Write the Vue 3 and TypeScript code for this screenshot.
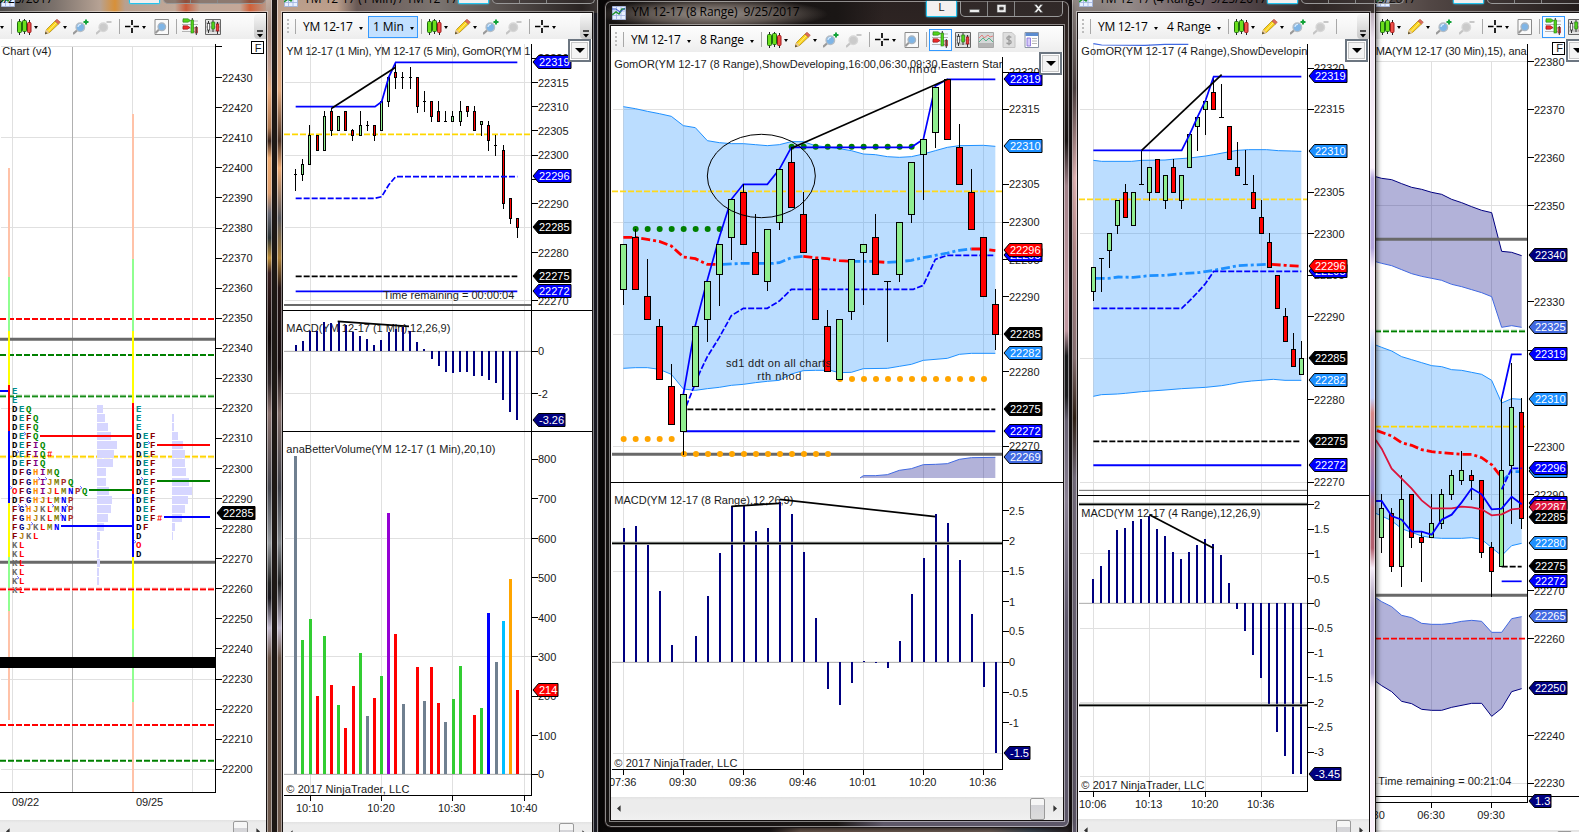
<script setup lang="ts">
type Attrs = Record<string, string | number>
interface Shape { tag: string; attrs: Attrs; text?: string }
type Pt = [number, number]
// high, body top, body bottom, low, kind (g up, r down, k flat)
type Candle = [number, number, number, number, 'g' | 'r' | 'k']

const BLUE = '#0000ff'
const NAVY = '#000080'
const DODGER = '#1e90ff'
const ROYAL = '#4169e1'
const RED = '#ff0000'
const GREEN = '#008000'
const GOLD = '#ffd700'
const ORANGE = '#ffa500'

/** Collects the shapes of one chart; data units are a third of a pixel. */
class Plot {
  shapes: Shape[] = []
  constructor(private ox: number, private axis: number, private left: number) {}
  X(x: number) { return this.ox + x / 3 }
  add(tag: string, attrs: Attrs, text?: string) { this.shapes.push({ tag, attrs, text }) }
  rect(x: number, y: number, width: number, height: number, fill: string, extra: Attrs = {}) {
    this.add('rect', { x, y, width, height, fill, ...extra })
  }
  text(x: number, y: number, s: string, extra: Attrs = {}) {
    this.add('text', { x: this.X(x), y: Math.round(y / 3) + 4, ...extra }, s)
  }
  gridH(...ys: number[]) { ys.forEach(y => this.rect(this.ox + Math.floor(this.left / 3) + 1, Math.floor(y / 3), (this.axis - this.left) / 3 - 1, 1, '#e0e0e0')) }
  gridV(y0: number, y1: number, ...xs: number[]) { xs.forEach(x => this.rect(this.ox + Math.floor(x / 3), y0, 1, y1 - y0, '#e0e0e0')) }
  path(pts: Pt[], stroke: string, width = 1.7, dash = '', oy = 0) {
    this.add('polyline', {
      points: pts.map(([x, y]) => `${this.X(x).toFixed(2)},${((y + oy) / 3).toFixed(2)}`).join(' '),
      fill: 'none', stroke, 'stroke-width': width, ...(dash ? { 'stroke-dasharray': dash } : {}),
    })
  }
  level(y: number, stroke: string, width: number, dash = '', x0 = this.left, x1 = this.axis) {
    this.path([[x0, y], [x1, y]], stroke, width, dash)
  }
  soft(y: number) { this.level(y, '#8a8f8a', 3); this.level(y, '#000', 1.2) }
  area(up: Pt[], low: Pt[], fill: string, oy = 0) {
    const pts = [...up, ...[...low].reverse()]
    this.add('polygon', { points: pts.map(([x, y]) => `${this.X(x)},${(y + oy) / 3}`).join(' '), fill, 'fill-opacity': 0.3 })
  }
  candles(x0: number, step: number, body: number, rows: Candle[], oy = 0) {
    const h = (body - 1) / 2
    rows.forEach(([hi, top, bot, lo, kind], i) => {
      const x = this.ox + Math.floor((x0 + step * i) / 3)
      const q = (v: number) => Math.floor((v + oy) / 3)
      this.rect(x, q(hi), 1, q(lo) - q(hi) + 1, '#000')
      this.rect(x - h, q(top), body, kind === 'k' ? 1 : q(bot) - q(top) + 1, '#000')
      if (kind !== 'k') this.rect(x - h + 1, q(top) + 1, body - 2, Math.max(1, q(bot) - q(top) - 1), kind === 'g' ? '#90ee90' : RED)
    })
  }
  bars(x0: number, step: number, zero: number, ends: number[], width: number, color: (i: number) => string, oy = 0) {
    ends.forEach((e, i) => {
      const a = Math.round((Math.min(e, zero) + oy) / 3)
      const b = Math.round((Math.max(e, zero) + oy) / 3)
      if (b > a) this.rect(this.ox + Math.round((x0 + step * i) / 3), a, width, b - a, color(i))
    })
  }
  dots(y: number, xs: number[], fill: string) {
    xs.forEach(x => this.add('circle', { cx: this.X(x), cy: y / 3, r: 3, fill }))
  }
  axisLine(y0: number, y1: number, x1 = this.left) {
    const x = this.ox + Math.floor(this.axis / 3)
    this.rect(x, y0, 1, y1 - y0 + 1, '#000')
    this.rect(this.X(x1), y1, x - this.X(x1), 1, '#000')
  }
  labels(rows: [number, string][], oy = 0) {
    const x = this.ox + Math.floor(this.axis / 3)
    rows.forEach(([y, s]) => {
      this.rect(x, Math.floor((y + oy) / 3), 7, 1, '#000')
      this.add('text', { x: x + 7, y: Math.round((y + oy) / 3) + 4 }, s)
    })
  }
  times(y: number, rows: [number, string][], tick: number) {
    rows.forEach(([x, s]) => {
      this.rect(this.ox + Math.floor(x / 3), tick, 1, 6, '#000')
      this.text(x - 2, y, s, { 'text-anchor': 'middle' })
    })
  }
  tag(y: number, s: string, fill: string, width = 40) {
    const x = this.ox + Math.floor(this.axis / 3)
    const c = Math.round(y / 3)
    this.add('polygon', {
      points: `${x + 2},${c} ${x + 7.5},${c - 6.5} ${x + width},${c - 6.5} ${x + width},${c + 6.5} ${x + 7.5},${c + 6.5}`,
      fill, stroke: '#000', 'stroke-width': 1,
    })
    this.add('text', { x: x + 8, y: c + 4, class: 'inv' }, s)
  }
}
const steps = (a: number, b: number, d: number) => { const r: number[] = []; for (let v = a; v <= b; v += d) r.push(v); return r }

/* ---------- market profile ---------- */
function profileChart() {
  const p = new Plot(0, 647, 0)
  p.gridH(139, 412, 682, 1225, 1495, 2038, 2308)
  p.gridV(47, 792, 37, 397, 577)
  p.rect(72, 47, 1, 745, '#b0b0b0')
  const D = '6 2'
  p.level(957, RED, 2, D); p.level(1018, '#696969', 3); p.level(1065, GREEN, 2, D)
  p.level(1189, '#8cc88c', 3, D); p.level(1189, GREEN, 1, D)
  p.level(1370, '#ffe680', 3, D); p.level(1370, GOLD, 1.4, D)
  p.level(1687, '#696969', 3)
  p.level(2175, RED, 2, D); p.level(2282, GREEN, 2, D)
  const column = (x: number, cuts: number[], cols: string[]) =>
    cols.forEach((c, i) => p.rect(x, cuts[i], 2, cuts[i + 1] - cuts[i], c))
  const S = '#ffc2a8', G = '#90ff90', Y = '#ffff00'
  column(8, [168, 277, 331, 385, 431, 503, 557, 611, 720], [S, G, Y, RED, BLUE, Y, G, S])
  column(132, [114, 259, 331, 403, 494, 557, 629, 702, 792], [S, G, Y, RED, BLUE, Y, G, S])
  p.rect(0, 657, 216, 11, '#000')
  const hist = (x: number, from: number, ws: number[]) =>
    ws.forEach((w, i) => p.rect(x, Math.round(387 + (from + i) * 9.05), w, 8, '#d6d6ff'))
  hist(97, 2, [6, 8, 11, 14, 20, 17, 16, 9, 9, 12, 15, 14, 11, 7, 3, 2, 2, 3, 2, 2])
  hist(172, 3, [2, 2, 6, 11, 13, 13, 14, 17, 20, 16, 13, 10, 3, 1])
  const inks: Record<string, string> = {
    D: '#000', E: '#008b8b', F: '#8b0000', Q: '#008b00', I: '#800080', G: '#000080', H: '#ff8c00',
    J: '#b8860b', K: '#696969', L: '#ff0000', M: '#808000', N: '#0000ff', P: '#a52a2a', O: '#ff0000', '#': '#ff0000',
  }
  const letters = (x: number, from: number, rows: string[]) =>
    rows.forEach((r, i) => [...r].forEach((ch, k) =>
      p.add('text', { x: x + k * 7, y: Math.round(394 + (from + i) * 9.05), class: 'tpo', fill: inks[ch] }, ch)))
  p.rect(0, 390, 8, 2, BLUE)
  letters(12, 0, ['E', 'E', 'DEQ', 'DEFQ', 'DEFQ', 'DEFQ', 'DEFIQ', 'DEFIQ#', 'DEFIQ', 'DFGHIMQ', 'DFGHIJMPQ', 'OFGHIJLMNPQ',
    'DFGHJLMNP', 'FGHJKLMNP', 'FGHJKLMNP', 'FGJKLMN', 'FJKL', 'KL', 'KL', 'KL', 'KL', 'KL', 'KL'])
  letters(136, 2, ['E', 'E', 'E', 'DEF', 'DEF', 'DEF', 'DEF', 'DEF', 'DEF', 'DEF', 'DEF', 'DEF', 'DEF#', 'DF', 'D', 'O', 'D'])
  const nib = (x: number, y: number) => p.add('path', { d: `M${x} ${y - 2}l2 2-2 1`, fill: 'none', stroke: '#5050ff', 'stroke-width': 0.8 })
  ;([[24, 434], [17, 452], [38, 479], [45, 479], [10, 488], [80, 488], [18, 506], [25, 506], [52, 506], [66, 506], [60, 515], [31, 524], [17, 578],
    [148, 443], [141, 479], [134, 542]] as Pt[]).forEach(([x, y]) => nib(x, y))
  p.level(1768, '#ff7f7f', 3, D); p.level(1768, RED, 1.2, D)
  p.rect(40, 435, 92, 2, RED); p.rect(89, 489, 43, 2, GREEN); p.rect(61, 525, 71, 2, BLUE)
  p.rect(157, 444, 53, 2, RED); p.rect(157, 480, 53, 2, GREEN); p.rect(164, 516, 46, 2, BLUE)
  p.axisLine(44, 792)
  p.rect(215, 46, 7, 1, '#000')
  p.labels(steps(0, 23, 1).map(i => [233 + i * 90.2, String(22430 - i * 10)] as [number, string]))
  p.tag(1540, '22285', '#000')
  p.text(7, 153, 'Chart (v4)', { textLength: 49 })
  p.text(36, 2405, '09/22', { textLength: 27 }); p.text(408, 2405, '09/25', { textLength: 27 })
  p.rect(251.5, 41.5, 12, 12, '#fff', { stroke: '#000' }); p.text(764, 143, 'F')
  return p.shapes
}

/* ---------- one minute ---------- */
function minuteChart() {
  const p = new Plot(265, 800, 57)
  const step = 21.45
  // vertical scale of the two indicator panes
  const v = (y: number) => y * 1.0179
  p.gridV(44, 795, 136, 350, 562, 778)
  p.gridH(248, 466, 682, 902, 1180, 1616, 1970)
  p.level(403, GOLD, 1.8, '6 2'); p.level(915, '#696969', 2)
  p.candles(92, step, 3, [
    [507, 522, 524, 570, 'k'], [477, 493, 523, 540, 'g'], [375, 406, 494, 494, 'g'], [406, 406, 452, 452, 'r'], [333, 349, 452, 452, 'g'],
    [325, 334, 392, 407, 'r'], [349, 349, 391, 391, 'g'], [334, 334, 391, 391, 'r'], [389, 391, 407, 422, 'r'], [334, 376, 406, 406, 'g'],
    [363, 376, 378, 391, 'k'], [376, 376, 407, 422, 'r'], [305, 305, 391, 391, 'g'], [232, 232, 304, 320, 'g'], [188, 217, 233, 264, 'r'],
    [217, 232, 234, 264, 'k'], [202, 232, 234, 264, 'k'], [232, 232, 320, 336, 'r'], [273, 303, 305, 334, 'k'], [304, 304, 349, 365, 'r'],
    [304, 334, 363, 363, 'r'], [334, 363, 365, 365, 'k'], [334, 349, 364, 364, 'g'], [304, 333, 365, 376, 'g'], [319, 319, 335, 349, 'r'],
    [319, 334, 391, 391, 'r'], [363, 365, 374, 407, 'g'], [365, 376, 421, 452, 'r'], [405, 435, 437, 467, 'k'], [436, 451, 610, 626, 'r'],
    [595, 595, 655, 670, 'r'], [655, 655, 683, 712, 'r']])
  p.path([[92, 320], [330, 320], [350, 305], [371, 232], [392, 187], [757, 187]], BLUE)
  p.path([[92, 595], [330, 595], [350, 590], [371, 555], [392, 530], [757, 530]], BLUE, 1.7, '6 2')
  p.path([[200, 325], [392, 202]], '#000')
  p.level(829, '#000', 1.7, '6 2', 92, 757); p.level(874, BLUE, 1.7, '', 92, 757)
  p.text(355, 886, 'Time remaining = 00:00:04', { textLength: 131 })
  p.text(64, 153, 'YM 12-17 (1 Min), YM 12-17 (5 Min), GomOR(YM 1', { textLength: 244 })
  p.text(64, 984, 'MACD(YM 12-17 (1 Min),12,26,9)', { textLength: 164 })
  p.level(1054, '#a9a9a9', 1)
  p.bars(89, step, v(151), [133, 121, 90, 90, 65, 68, 62, 75, 95, 106, 115, 133, 118, 93, 84, 80, 90, 124, 144, 174, 195, 212, 214, 212, 212, 224, 224, 236, 245, 295, 330, 354].map(v), 2, () => NAVY, 900)
  p.path([[218, 964], [432, 979]], '#000')
  const V: Record<string, string> = { s: '#708090', g: '#32cd32', r: RED, p: '#9400d3', b: BLUE, c: '#00bfff', o: ORANGE }
  const kinds = 'sggrgrgrrgsrgprssrsrrsggsrgbscor'
  p.level(2323, '#a9a9a9', 1)
  p.bars(88, step, v(1398), [460, 1002, 940, 1167, 990, 1135, 1194, 1261, 1138, 1040, 1226, 1173, 1108, 628, 984, 1191, 1398, 1082, 1182, 1082, 1188, 1244, 1176, 1079, 1398, 1223, 1203, 923, 1067, 946, 822, 1149].map(v), 3, i => V[kinds[i]], 900)
  p.text(64, 1348, 'anaBetterVolume(YM 12-17 (1 Min),20,10)', { textLength: 209 })
  p.text(64, 2368, '© 2017 NinjaTrader, LLC', { textLength: 123 })
  p.axisLine(44, 795)
  p.rect(283, 310, 309, 1, '#000'); p.rect(283, 431, 309, 1, '#000')
  p.labels([[175, '22320'], [248, '22315'], [320, '22310'], [392, '22305'], [466, '22300'], [538, '22295'], [611, '22290'], [758, '22280'], [902, '22270']])
  const low: [number, string][] = [[151, '0'], [277, '-2'], [470, '800'], [586, '700'], [703, '600'], [818, '500'], [936, '400'], [1051, '300'], [1168, '200'], [1284, '100'], [1398, '0']]
  p.labels(low.map(([y, s]) => [v(y), s]), 900)
  p.tag(187, '22319', BLUE); p.tag(528, '22296', BLUE); p.tag(681, '22285', '#000'); p.tag(829, '22275', '#000'); p.tag(873, '22272', BLUE)
  p.tag(1260, '-3.26', NAVY, 34); p.tag(2070, '214', RED, 27)
  p.times(2425, [[136, '10:10'], [350, '10:20'], [562, '10:30'], [778, '10:40']], 795)
  return p.shapes
}

/* ---------- eight range ---------- */
function eightChart() {
  const p = new Plot(600, 1208, 36)
  const W = '9 3 3 3'
  p.gridV(60, 769, ...steps(70, 1150, 180))
  p.gridH(328, 667, 1003, 1339, 1714, 2260)
  const up: Pt[] = [[70, 320], [106, 326], [142, 334], [178, 341], [214, 349], [250, 377], [286, 383], [322, 422], [358, 428], [394, 431], [430, 431], [466, 434], [502, 437], [538, 434], [574, 425], [610, 425], [646, 437], [682, 441], [718, 446], [754, 452], [790, 462], [826, 464], [862, 470], [898, 472], [934, 470], [970, 462], [1006, 452], [1042, 442], [1078, 437], [1150, 436], [1186, 439]]
  const low: Pt[] = ([[70, 385], [106, 383], [142, 383], [178, 388], [214, 403], [250, 447], [286, 451], [322, 446], [358, 442], [394, 436], [430, 433], [466, 428], [502, 424], [538, 421], [574, 402], [610, 392], [646, 391], [690, 391], [718, 398], [754, 397], [790, 386], [862, 385], [898, 379], [934, 373], [970, 361], [1042, 355], [1078, 343], [1114, 340], [1186, 340]] as Pt[]).map(([x, y]) => [x, y + 720])
  p.area(up, low, DODGER)
  p.path(up, DODGER, 1); p.path(low, DODGER, 1)
  p.level(574, '#ffd91a', 1.8, '6 2')
  p.level(1363, '#696969', 3)
  const hill: Pt[] = [[780, 1434], [790, 1427], [826, 1427], [862, 1424], [898, 1411], [934, 1406], [970, 1394], [1006, 1393], [1042, 1391], [1078, 1378], [1114, 1373], [1186, 1372]]
  p.area(hill, [[780, 1434], [1186, 1434]], NAVY); p.path(hill, ROYAL, 1)
  p.dots(687, steps(107, 359, 36), GREEN); p.dots(440, steps(575, 935, 36), GREEN)
  p.dots(1317, steps(71, 215, 36), ORANGE); p.dots(1362, steps(252, 684, 36), ORANGE); p.dots(1137, steps(720, 1152, 36), ORANGE)
  p.path([[70, 712], [106, 712], [142, 718], [178, 724], [214, 738], [250, 771], [286, 776], [322, 793], [350, 793]], RED, 2.8, W)
  p.path([[368, 793], [430, 790], [520, 790], [538, 788], [574, 773], [610, 769]], DODGER, 2.8, W)
  p.path([[610, 769], [646, 773], [682, 776], [718, 782], [754, 784]], RED, 2.8, W)
  p.path([[754, 784], [826, 784]], DODGER, 2.8, W); p.path([[826, 785], [856, 787]], RED, 2.8, W)
  p.path([[862, 787], [898, 785], [934, 781], [970, 773], [1006, 766], [1042, 759], [1078, 751], [1114, 747]], DODGER, 2.8, W)
  p.path([[1114, 747], [1150, 747], [1186, 752]], RED, 2.8, W)
  p.path([[250, 1240], [298, 1120], [322, 1070], [358, 1012], [394, 947], [430, 925], [502, 925], [538, 903], [574, 868], [940, 868], [970, 856], [1006, 778], [1042, 766], [1186, 766]], BLUE, 1.7, '6 2')
  p.path([[250, 1183], [286, 976], [322, 840], [358, 712], [394, 598], [430, 553], [502, 553], [538, 508], [574, 442], [934, 442], [970, 418], [1006, 258], [1042, 238], [1186, 238]], BLUE)
  p.level(1228, '#000', 1.7, '6 2', 262, 1186); p.level(1294, BLUE, 2, '', 250, 1186)
  p.candles(70, 36, 7, [
    [733, 733, 868, 914, 'g'], [687, 712, 868, 868, 'r'], [777, 889, 959, 959, 'r'], [957, 979, 1139, 1139, 'r'], [1092, 1158, 1273, 1273, 'r'],
    [1183, 1183, 1295, 1363, 'g'], [979, 979, 1159, 1159, 'g'], [844, 844, 959, 1025, 'g'], [733, 733, 823, 915, 'g'], [598, 598, 712, 779, 'g'],
    [553, 577, 733, 733, 'r'], [642, 757, 823, 823, 'r'], [688, 688, 845, 870, 'g'], [508, 508, 667, 689, 'g'], [442, 487, 622, 622, 'r'],
    [576, 643, 758, 758, 'r'], [778, 778, 959, 959, 'r'], [932, 979, 1115, 1115, 'r'], [958, 958, 1139, 1139, 'g'], [778, 778, 934, 958, 'g'],
    [733, 733, 758, 914, 'g'], [642, 712, 823, 823, 'r'], [844, 844, 844, 1025, 'k'], [667, 667, 823, 845, 'g'], [487, 487, 643, 668, 'g'],
    [418, 418, 463, 599, 'g'], [262, 262, 398, 443, 'g'], [238, 238, 418, 418, 'r'], [373, 442, 553, 553, 'r'], [507, 577, 688, 688, 'r'],
    [712, 712, 890, 890, 'r'], [868, 913, 1003, 1049, 'r']])
  p.path([[574, 445], [1043, 238]], '#000')
  p.add('ellipse', { cx: p.X(484), cy: 176, rx: 54, ry: 41.7, fill: 'none', stroke: '#000', 'stroke-width': 1 })
  p.text(378, 1090, 'sd1 ddt on all charts', { textLength: 105 }); p.text(472, 1129, 'rth nhod', { textLength: 44 })
  p.text(43, 192, 'GomOR(YM 12-17 (8 Range),ShowDeveloping,16:00,06:30,09:30,Eastern Star', { textLength: 388 })
  p.text(928, 208, 'nhod', { textLength: 27 })
  p.text(43, 1501, 'MACD(YM 12-17 (8 Range),12,26,9)', { textLength: 179 })
  p.level(1987, '#a9a9a9', 1)
  p.bars(68, 36, 547, [144, 138, 195, 333, 495, 547, 468, 348, 219, 79, 79, 153, 144, 66, 102, 216, 414, 627, 675, 609, 543, 549, 564, 483, 342, 234, 102, 129, 240, 402, 621, 819], 2, () => NAVY, 1440)
  p.soft(1630)
  p.path([[394, 1519], [538, 1510]], '#000'); p.path([[538, 1498], [1006, 1550]], '#000')
  p.text(43, 2290, '© 2017 NinjaTrader, LLC', { textLength: 123 })
  p.axisLine(57, 769); p.rect(611, 482, 452, 1, '#000')
  p.labels([[217, '22320'], [328, '22315'], [553, '22305'], [667, '22300'], [779, '22295'], [890, '22290'], [1115, '22280'], [1339, '22270']])
  p.labels([[92, '2.5'], [182, '2'], [274, '1.5'], [365, '1'], [454, '0.5'], [547, '0'], [638, '-0.5'], [728, '-1']], 1440)
  p.tag(238, '22319', BLUE); p.tag(437, '22310', DODGER); p.tag(766, '22295', BLUE); p.tag(750, '22296', RED); p.tag(1002, '22285', '#000')
  p.tag(1058, '22282', DODGER); p.tag(1227, '22275', '#000'); p.tag(1292, '22272', BLUE); p.tag(1370, '22269', ROYAL); p.tag(2259, '-1.5', NAVY, 28)
  p.times(2347, [[70, '07:36'], [250, '09:30'], [430, '09:36'], [610, '09:46'], [790, '10:01'], [970, '10:20'], [1150, '10:36']], 769)
  return p.shapes
}

/* ---------- four range ---------- */
function fourChart() {
  const p = new Plot(1065, 728, 42)
  const W = '9 3 3 3'
  p.gridV(44, 791, 85, 253, 421, 589)
  p.gridH(328, 701, 1075, 1447, 1661, 1885, 2108, 2330)
  const up: Pt[] = [[85, 481], [110, 484], [200, 484], [230, 481], [300, 480], [330, 477], [374, 474], [422, 468], [446, 464], [494, 455], [518, 451], [550, 449], [605, 449], [640, 452], [680, 453], [709, 454]]
  const low: Pt[] = [[85, 1189], [109, 1184], [157, 1182], [181, 1180], [229, 1175], [300, 1170], [350, 1166], [422, 1162], [470, 1157], [494, 1153], [525, 1147], [560, 1143], [600, 1140], [625, 1138], [660, 1141], [709, 1141]]
  p.area(up, low, DODGER); p.path(up, DODGER, 1); p.path(low, DODGER, 1)
  p.level(598, '#ffd91a', 1.8, '6 2')
  p.path([[85, 131], [110, 135], [240, 136], [300, 133], [370, 133]], ROYAL, 1.2)
  p.path([[92, 835], [130, 835], [160, 831], [205, 832], [253, 827], [300, 826], [350, 821], [400, 818], [446, 811], [494, 802], [520, 797], [603, 793]], DODGER, 2.8, W)
  p.path([[620, 793], [660, 796], [709, 799]], RED, 2.8, W)
  p.path([[85, 925], [350, 925], [374, 902], [398, 877], [422, 850], [446, 814], [709, 814]], BLUE, 1.7, '6 2')
  p.candles(85, 24, 5, [
    [802, 802, 874, 902, 'g'], [775, 775, 775, 875, 'k'], [700, 700, 751, 803, 'g'], [601, 601, 676, 701, 'g'], [552, 577, 652, 652, 'r'],
    [577, 577, 676, 676, 'g'], [451, 553, 553, 553, 'k'], [502, 502, 577, 602, 'g'], [478, 478, 577, 577, 'r'], [526, 526, 601, 626, 'g'],
    [477, 502, 577, 577, 'r'], [526, 526, 601, 626, 'g'], [403, 403, 502, 502, 'g'], [352, 352, 379, 452, 'g'], [304, 304, 328, 404, 'g'],
    [230, 277, 328, 328, 'r'], [252, 352, 352, 352, 'k'], [379, 379, 478, 478, 'r'], [427, 502, 526, 526, 'r'], [451, 553, 553, 553, 'k'],
    [526, 577, 625, 625, 'r'], [601, 652, 700, 700, 'r'], [700, 727, 802, 802, 'r'], [826, 826, 925, 925, 'r'], [925, 949, 1024, 1024, 'r'],
    [999, 1048, 1099, 1099, 'r'], [1023, 1075, 1123, 1123, 'g']])
  p.path([[85, 451], [350, 451], [374, 403], [398, 350], [422, 300], [446, 230], [709, 230]], BLUE)
  p.path([[230, 451], [470, 224]], '#000')
  p.level(1324, '#000', 1.7, '6 2', 85, 705); p.level(1396, BLUE, 2, '', 85, 709)
  p.level(1471, '#696969', 1)
  p.text(49, 153, 'GomOR(YM 12-17 (4 Range),ShowDevelopin', { textLength: 226 })
  p.level(1810, '#a9a9a9', 1)
  p.bars(82, 24, 610, [537, 498, 450, 390, 384, 363, 357, 347, 387, 408, 456, 477, 456, 435, 417, 432, 465, 549, 627, 693, 765, 834, 912, 996, 1068, 1122, 1122], 2, () => NAVY, 1200)
  p.soft(1513); p.soft(2116)
  p.text(49, 1540, 'MACD(YM 12-17 (4 Range),12,26,9)', { textLength: 179 })
  p.path([[253, 1544], [446, 1645]], '#000')
  p.text(49, 2355, '© 2017 NinjaTrader, LLC', { textLength: 123 })
  p.axisLine(44, 791); p.rect(1078, 495, 291, 1, '#000')
  p.labels([[205, '22320'], [328, '22315'], [577, '22305'], [701, '22300'], [826, '22295'], [950, '22290'], [1199, '22280'], [1447, '22270']])
  p.labels([[314, '2'], [388, '1.5'], [461, '1'], [536, '0.5'], [610, '0'], [685, '-0.5'], [758, '-1'], [833, '-1.5'], [908, '-2'], [982, '-2.5'], [1057, '-3']], 1200)
  p.tag(228, '22319', BLUE); p.tag(453, '22310', DODGER); p.tag(813, '22295', BLUE); p.tag(798, '22296', RED); p.tag(1073, '22285', '#000')
  p.tag(1139, '22282', DODGER); p.tag(1323, '22275', '#000'); p.tag(1395, '22272', BLUE); p.tag(2322, '-3.45', NAVY, 34)
  p.times(2412, [[85, '10:06'], [253, '10:13'], [421, '10:20'], [589, '10:36']], 791)
  return p.shapes
}

/* ---------- thirty minute ---------- */
function thirtyChart() {
  const p = new Plot(1355, 518, 60)
  const W = '9 3 3 3'
  const L = 1140
  p.gridV(61, 796, 230, 410)
  p.gridH(185, 617, 1052, 1484, 2350)
  const a1: Pt[] = [[62, 530], [80, 535], [110, 539], [140, 551], [170, 562], [200, 568], [230, 577], [260, 583], [290, 598], [320, 608], [350, 620], [380, 631], [410, 638], [440, 754], [470, 757], [500, 767]]
  const a2: Pt[] = [[62, 785], [80, 790], [110, 797], [140, 809], [170, 821], [200, 829], [230, 835], [260, 841], [290, 853], [320, 860], [350, 869], [380, 878], [410, 890], [440, 982], [470, 977], [500, 982]]
  const b1: Pt[] = [[62, -105], [80, -98], [110, -87], [140, -70], [170, -61], [200, -52], [230, -43], [260, -40], [290, -31], [320, -29], [350, -23], [380, -17], [410, 1], [440, 69], [470, 56], [500, 58]]
  const b2: Pt[] = [[62, 400], [80, 408], [110, 422], [140, 446], [170, 457], [200, 468], [230, 473], [260, 475], [320, 475], [350, 473], [380, 478], [410, 503], [440, 527], [470, 497], [500, 490]]
  const c1: Pt[] = [[62, 653], [80, 665], [110, 680], [140, 706], [170, 713], [200, 730], [230, 733], [260, 733], [290, 730], [320, 724], [350, 721], [380, 724], [410, 757], [440, 757], [470, 716], [500, 710]]
  const c2: Pt[] = [[62, 904], [80, 917], [110, 935], [140, 964], [170, 971], [200, 988], [230, 991], [260, 991], [290, 982], [350, 970], [380, 970], [410, 1009], [440, 985], [470, 935], [500, 926]]
  p.area(a1, a2, NAVY); p.path(a1, NAVY, 1); p.path(a2, ROYAL, 1)
  p.area(b1, b2, DODGER, L); p.path(b1, DODGER, 1, '', L); p.path(b2, DODGER, 1, '', L)
  p.area(c1, c2, NAVY, L); p.path(c1, ROYAL, 1, '', L); p.path(c2, NAVY, 1, '', L)
  p.level(718, '#696969', 3); p.level(1786, '#696969', 3); p.level(1280, GOLD, 1.8, '6 2')
  p.level(994, '#8cc88c', 3, '6 2'); p.level(994, GREEN, 1.2, '6 2')
  p.level(1916, RED, 1.8, '6 2')
  p.path([[66, 152], [110, 168], [140, 188], [170, 196], [200, 209], [230, 215], [260, 218], [320, 223], [350, 223], [380, 233], [410, 254], [440, 293]], RED, 2.8, W, L)
  p.path([[440, 305], [470, 275], [500, 275]], DODGER, 2.6, W, L)
  p.candles(80, 30, 5, [
    [343, 385, 472, 517, 'g'], [385, 400, 560, 575, 'r'], [287, 358, 560, 620, 'g'], [343, 343, 472, 503, 'r'], [455, 472, 487, 605, 'r'],
    [343, 430, 472, 472, 'g'], [328, 343, 430, 446, 'g'], [272, 286, 343, 358, 'g'], [215, 272, 301, 314, 'g'], [272, 286, 301, 358, 'r'],
    [301, 301, 517, 532, 'r'], [488, 502, 575, 648, 'r'], [56, 271, 560, 560, 'g'], [-50, 82, 256, 431, 'g'], [55, 97, 415, 445, 'r']], L)
  p.path([[440, 56], [470, -77], [500, -77]], BLUE, 1.8, '', L)
  p.path([[440, 328], [470, 265], [500, 265]], BLUE, 1.8, '6 2', L)
  p.path([[62, 180], [80, 206], [110, 266], [140, 296], [170, 326], [200, 361], [230, 385], [290, 385], [320, 380], [350, 382], [380, 388], [410, 406], [440, 403], [470, 388], [500, 385]], '#dc143c', 1.8, '', L)
  p.path([[62, 363], [80, 363], [110, 408], [140, 419], [170, 455], [200, 455], [230, 464], [260, 419], [290, 404], [320, 367], [350, 325], [380, 343], [410, 388], [440, 386], [470, 350], [500, 373]], BLUE, 1.8, '', L)
  p.level(1700, '#000', 1.7, '6 2', 440, 500); p.level(1744, BLUE, 1.7, '', 440, 500)
  p.text(62, 153, 'MA(YM 12-17 (30 Min),15), ana', { textLength: 151 })
  p.text(70, 2343, 'Time remaining = 00:21:04', { textLength: 133 })
  p.axisLine(44, 802, 60); p.rect(1375, 796, 210, 1, '#000')
  p.labels([[185, '22380'], [329, '22370'], [473, '22360'], [617, '22350'], [905, '22330'], [1052, '22320'], [1340, '22300'], [1484, '22290'], [1772, '22270'], [1916, '22260'], [2207, '22240'], [2350, '22230']])
  p.tag(765, '22340', NAVY); p.tag(980, '22325', ROYAL); p.tag(1062, '22319', BLUE); p.tag(1196, '22310', DODGER)
  p.tag(1412, '22295', DODGER); p.tag(1404, '22296', BLUE); p.tag(1510, '22288', BLUE); p.tag(1521, '22287', '#dc143c'); p.tag(1552, '22285', '#000')
  p.tag(1629, '22280', DODGER); p.tag(1697, '22275', '#000'); p.tag(1742, '22272', BLUE); p.tag(1848, '22265', ROYAL); p.tag(2064, '22250', NAVY); p.tag(2402, '1.3', NAVY, 24)
  p.times(2445, [[50, '03:30'], [230, '06:30'], [410, '09:30']], 802)
  p.rect(1552.5, 42.5, 12, 12, '#fff', { stroke: '#000' }); p.text(604, 143, 'F')
  return p.shapes
}

interface Win {
  id: string; title: string; x: number; w: number; chartY: number; chartH: number
  head: 'full' | 'tail' | 'none'; period: string; hot?: boolean; icons: number; drop: boolean; shapes: Shape[]
}
// icons: how many toolbar tools fit before the overflow button
const windows: Win[] = [
  { id: 'profile', title: 'YM 12-17 (30 Min)  9/25/2017', x: 0, w: 266, chartY: 39, chartH: 781, head: 'tail', period: '', icons: 7, drop: false, shapes: profileChart() },
  { id: 'minute', title: 'YM 12-17 (1 Min) / YM 12-17', x: 283, w: 309, chartY: 39, chartH: 783, head: 'full', period: '1 Min', hot: true, icons: 5, drop: true, shapes: minuteChart() },
  { id: 'thirty', title: 'YM 12-17 (30 Min)  9/25/2017', x: 1375, w: 215, chartY: 39, chartH: 791, head: 'none', period: '', icons: 7, drop: true, shapes: thirtyChart() },
  { id: 'four', title: 'YM 12-17 (4 Range)  9/25/2017', x: 1078, w: 291, chartY: 39, chartH: 780, head: 'full', period: '4 Range', icons: 4, drop: true, shapes: fourChart() },
  { id: 'eight', title: 'YM 12-17 (8 Range)  9/25/2017', x: 611, w: 452, chartY: 52, chartH: 745, head: 'full', period: '8 Range', icons: 10, drop: true, shapes: eightChart() },
]
</script>

<template>
  <div class="desktop">
    <svg class="defs" aria-hidden="true">
      <defs>
        <symbol id="i-candles" viewBox="0 0 16 16">
          <path d="M2.5 0v16M7.5 0v15M12.500 1v15" stroke="#222" />
          <rect x=".5" y="2.500" width="4" height="11" rx="1" fill="#6be01c" stroke="#1f6d10" />
          <rect x="5.500" y="1.500" width="4" height="11" rx="1" fill="#6be01c" stroke="#1f6d10" />
          <rect x="10.500" y="3.500" width="3.500" height="10" rx="1" fill="#f0504a" stroke="#a01818" />
        </symbol>
        <symbol id="i-pencil" viewBox="0 0 16 16">
          <path d="M0 15l1.500-4.500L10 2l3.500 3-9 8.500z" fill="#fbd21c" stroke="#b08a18" stroke-width=".8" />
          <path d="M3.500 12L11.500 3.500" stroke="#fff08a" stroke-width="1" />
          <path d="M10 2l2-1.700 3.300 3L13.500 5z" fill="#e06a5a" stroke="#b05a48" stroke-width=".7" />
          <path d="M0 15l1.500-4.500L4.500 13.500z" fill="#e8c898" /><path d="M0 15l.7-2 1.600 1.300z" fill="#222" />
        </symbol>
        <symbol id="i-zoomin" viewBox="0 0 16 16">
          <path d="M0 15l4.500-4" stroke="#999" stroke-width="2.200" />
          <circle cx="7.300" cy="8.300" r="4.300" fill="#7fb5e6" stroke="#b4bcc4" stroke-width="1.300" />
          <path d="M5 8a2.600 2.600 0 0 1 3-2.500" stroke="#d8ecff" stroke-width="1.200" fill="none" />
          <path d="M13 .5v5M10.500 3h5" stroke="#12a238" stroke-width="1.900" />
        </symbol>
        <symbol id="i-zoomout" viewBox="0 0 16 16">
          <path d="M0 15l4.500-4" stroke="#c4c4c4" stroke-width="2.200" />
          <circle cx="7.300" cy="8.300" r="4.300" fill="#cbcbcb" stroke="#d6d6d6" stroke-width="1.300" />
          <path d="M10.500 3h5" stroke="#c0c0c0" stroke-width="1.700" />
        </symbol>
        <symbol id="i-cross" viewBox="0 0 16 16">
          <path d="M7 1v5M7 9v5M0 7.500h5.500M8.500 7.500H14" stroke="#000" stroke-width="1.700" />
        </symbol>
        <symbol id="i-preview" viewBox="0 0 16 16">
          <path d="M1 .5h13.500v15H1z" fill="#fafafa" stroke="#8a8a8a" />
          <path d="M1.500 14l4-4" stroke="#999" stroke-width="2" />
          <circle cx="7.800" cy="7.800" r="3.800" fill="#7fb5e6" stroke="#a8b4c0" stroke-width="1.300" />
        </symbol>
        <symbol id="i-trader" viewBox="0 0 17 17">
          <path d="M0 3h16M0 6.500h16M0 10h16M0 13.500h16" stroke="#b4b4b4" />
          <path d="M1 .8h5L8.500 2.500 6 4.200H1z" fill="#54d41a" stroke="#1f7a10" stroke-width=".6" />
          <path d="M1 7.800h4.500L8 9.500 5.500 11.200H1z" fill="#ee2a2a" stroke="#8a1010" stroke-width=".6" />
          <rect x="9" y="2" width="2.600" height="13" fill="#54d41a" stroke="#1f7a10" stroke-width=".6" />
          <rect x="13" y="9.500" width="2.600" height="5.500" fill="#f27878" stroke="#9a2020" stroke-width=".6" />
          <path d="M10.300 0v2M14.300 8v9" stroke="#333" />
        </symbol>
        <symbol id="i-framed" viewBox="0 0 16 16">
          <path d="M.5 .5h15v15H.5z" fill="#e4e4e4" stroke="#666" /><path d="M1 4h14M1 8h14M1 12h14" stroke="#aaa" />
          <path d="M3.500 2v12M8 1v12M12.500 3v12" stroke="#333" />
          <rect x="2.300" y="4.500" width="2.400" height="6.500" fill="#fff" stroke="#333" stroke-width=".7" />
          <rect x="6.800" y="3" width="2.600" height="7" fill="#54d41a" stroke="#1f7a10" stroke-width=".7" />
          <rect x="11.200" y="5" width="2.600" height="7" fill="#ee3a3a" stroke="#8a1010" stroke-width=".7" />
        </symbol>
        <symbol id="i-lines" viewBox="0 0 16 16">
          <path d="M.5 .5h15v15H.5z" fill="#d4d8d8" stroke="#a8a8a8" /><path d="M1 11h14v4H1z" fill="#b4b4b4" />
          <path d="M1 6l3-3 2 3 4-3 2 2 3-1" fill="none" stroke="#e08080" /><path d="M1 10l4-4 3 3 3-3 4 4" fill="none" stroke="#58b088" />
        </symbol>
        <symbol id="i-dollar" viewBox="0 0 16 16">
          <path d="M2 .5h9l3 3v12H2z" fill="#dedede" stroke="#c4c4c4" />
          <path d="M10.300 5.500C9 4 5.800 4.300 5.800 6.200S10.200 7.800 10.200 10 7 12.300 5.500 10.800M8 3.300v10" fill="none" stroke="#9c9c9c" stroke-width="1.300" />
        </symbol>
        <symbol id="i-panel" viewBox="0 0 16 16">
          <path d="M1 .5h13.500v15H1z" fill="#fff" stroke="#8a94a4" /><path d="M1.500 1h12.500v3H1.500z" fill="#5c8cd0" />
          <path d="M3 6h3.500v8H3z" fill="#d8ccf8" stroke="#8068d8" stroke-width=".8" /><path d="M8 6.500h5M8 9h5M8 11.500h5" stroke="#b8b8b8" />
        </symbol>
      </defs>
    </svg>

    <section v-for="win in windows" :key="win.id" class="window" :class="win.id">
      <header class="title">
        <svg class="app-icon" viewBox="0 0 14 14">
          <path d="M.5 .5h13v13H.5z" fill="#e8f0ff" stroke="#a4b4d8" /><path d="M4.500 1v12M9 1v12M1 5h12M1 9.500h12" stroke="#9cb0e0" stroke-width=".8" />
          <path d="M0 9l4-3 3 2 3-5h3" fill="none" stroke="#209030" stroke-width="1.500" /><path d="M0 3h4l4 3 5-4" fill="none" stroke="#3050c8" />
        </svg>
        <span class="title-text">{{ win.title }}</span>
        <span class="link-btn">L</span>
        <span class="controls">
          <i><svg viewBox="0 0 12 10"><path d="M.5 6h11v3.500H.5z" fill="#eee" stroke="#444" stroke-width=".7" /></svg></i>
          <i><svg viewBox="0 0 12 10"><path d="M1 .5h10v9H1zM4 3.500h4v3H4z" fill="#eee" fill-rule="evenodd" stroke="#444" stroke-width=".7" /></svg></i>
          <i class="close"><svg viewBox="0 0 12 10"><path d="M1 .5h3l2 2.500L8 .5h3L7.500 5 11 9.500H8L6 7 4 9.500H1L4.500 5z" fill="#eee" stroke="#444" stroke-width=".7" /></svg></i>
        </span>
      </header>

      <div class="client">
        <div class="toolbar">
          <template v-if="win.head === 'full'">
            <i class="grip" /><i class="sep first" />
            <span class="combo">YM 12-17<b class="caret" /></span>
            <span class="combo period" :class="{ hot: win.hot }">{{ win.period }}<b class="caret" /></span>
          </template>
          <b v-if="win.head === 'tail'" class="caret lone" />
          <i v-if="win.head !== 'none'" class="sep lead" />
          <svg class="ic c1"><use href="#i-candles" /></svg><b class="caret" />
          <svg class="ic c2"><use href="#i-pencil" /></svg><b class="caret near" />
          <svg class="ic c3"><use href="#i-zoomin" /></svg>
          <svg class="ic c4"><use href="#i-zoomout" /></svg>
          <i class="sep mid" />
          <template v-if="win.icons >= 5"><svg class="ic c5"><use href="#i-cross" /></svg><b class="caret" /></template>
          <template v-if="win.icons >= 7">
            <svg class="ic c6"><use href="#i-preview" /></svg><i class="sep late" />
            <span class="toggle" :class="{ on: win.id !== 'profile' }"><svg class="ic big"><use href="#i-trader" /></svg></span>
            <svg class="ic c7"><use href="#i-framed" /></svg>
          </template>
          <template v-if="win.icons >= 10">
            <svg class="ic c8"><use href="#i-lines" /></svg>
            <svg class="ic c9"><use href="#i-dollar" /></svg>
            <svg class="ic c10"><use href="#i-panel" /></svg>
          </template>
          <span v-if="win.icons < 10" class="overflow"><svg viewBox="0 0 8 8"><path d="M1 1h6" stroke="#000" stroke-width="1.300" /><path d="M1 4h6L4 7.500z" /></svg></span>
        </div>
        <svg class="chart" :width="win.w" :height="win.chartH" :viewBox="`${win.x} ${win.chartY} ${win.w} ${win.chartH}`">
          <component :is="s.tag" v-for="(s, i) in win.shapes" :key="i" v-bind="s.attrs">{{ s.text }}</component>
        </svg>
        <span v-if="win.drop" class="drop"><b class="caret" /></span>
        <footer class="scroll">
          <svg class="arrow" viewBox="0 0 5 8"><path d="M4.500 0v8L0 4z" fill="#333" /></svg>
          <span class="thumb" />
          <svg class="arrow" viewBox="0 0 5 8"><path d="M.5 0v8L5 4z" fill="#333" /></svg>
        </footer>
      </div>
    </section>
  </div>
</template>

<style>
html, body { overflow: hidden; }
</style>

<style scoped>
.desktop {
  position: relative; width: 1579px; height: 832px; overflow: hidden;
  background: linear-gradient(90deg, #4a3a30 0, #3a3028 280px, #0c0a0a 600px, #1c1818 770px, #66544a 800px, #6c5c54 990px, #3a4450 1030px, #2a2224 1070px, #cbbccb 1579px);
  font-family: "Open Sans", "Noto Sans", sans-serif; font-size: 12px; color: #000;
}
.defs { position: absolute; width: 0; height: 0; }

.window {
  position: absolute; top: -13px; bottom: -30px; box-sizing: border-box; padding: 0 6px;
  border: 1px solid #1c1616; box-shadow: inset 0 0 0 1px rgba(255, 255, 255, .5), 0 0 5px 1px rgba(0, 0, 0, .65);
}
.profile { left: -7px; width: 280px; background: linear-gradient(#cbb9ae 0, #a58c80 40px, #c4a294 80px, #efb080 103px, #b07850 140px, #3c241a 153px, #f2ae72 170px, #e0a070 205px, #6c6c78 225px, #2c3436 250px, #c09038 270px, #3a2020 285px, #100808 350px, #342a2c 395px, #8c7470 425px, #484850 500px, #989ca0 555px, #242424 595px, #1c1a20 610px, #c4bcd0 640px, #6c564a 670px, #705c50); }
.minute { left: 276px; width: 323px; background: linear-gradient(90deg, transparent 60px, #6a5a56 80px, #7b7470 50%, #292322 95%, #3a3433) 0 0/100% 25px no-repeat, linear-gradient(90deg, transparent 50%, #2a2828 50%, #1a1a22) , linear-gradient(#b39c8e 0, #e0a87c 103px, #4c3224 153px, #eeaa72 180px, #56565c 230px, #a87c34 270px, #241414 300px, #180e10 380px, #806c68 425px, #404048 500px, #808488 555px, #242424 595px, #c0b8cc 640px, #6a5548 670px, #6c584c); }
.eight { left: 604px; width: 466px; top: 0; bottom: auto; height: 828px; border-radius: 7px; background: radial-gradient(ellipse 115px 16px at 108px 13px, #9b938e, rgba(110, 100, 94, .8) 60%, transparent) , linear-gradient(90deg, #161312 0, #1a1615 50%, transparent 60%), linear-gradient(#2a2221 0, #332725 60px, #181212 140px, #a08088 185px, #c29ca4 290px, #bf96a0 330px, #18181a 355px, #1c1b1e 395px, #665f70 420px, #8b8194 500px, #5d566a 620px, #5d5768 832px); }
.four { left: 1071px; width: 305px; background: linear-gradient(90deg, transparent 30px, #948a88 55px, #64555a 45%, #2f2726 80%, #3c3432) 0 0/100% 25px no-repeat, linear-gradient(#9a928e, #4c4040 100px, #e8b8b8 190px, #bb9090 260px, #8c7476 370px, #301f14 430px, #787080 490px, #5a5464) 0 0/50% 100% no-repeat, linear-gradient(#8c8088 0, #eadfec 50px, #fbf0fb 150px, #fbf0fb 180px, #b7aae0 190px, #b4a5dc 260px, #fbf0fb 280px, #fbf0fb 340px, #c0d4fb 360px, #c0cdf8 410px, #d88888 425px, #9070b8 500px, #b06070 520px, #b46070 560px, #f6ecf8 580px, #c0b4cc 605px, #b0a2d2 620px, #b0a2d2 685px, #fbf0fb 700px); }
.thirty { left: 1368px; width: 229px; background: linear-gradient(90deg, #6f6560, #524745 60px, #1d1716); }

.title { display: flex; align-items: center; height: 26px; margin-top: -1px; padding-left: 1px; white-space: pre; position: relative; }
.app-icon { width: 14px; height: 14px; flex: none; }
.title-text { margin-left: 6px; font-size: 12px; line-height: 16px; margin-top: -2px; letter-spacing: -.08px; }
.profile .title-text { margin-left: -125px; padding-left: 2px; }
.profile .title { background: linear-gradient(90deg, #4c4a48, #7c726c 55px, #b6a294 100px, #d89038 115px, #b8a090 125px, #c0a898 175px, #c85c3c 186px, #c0a898 200px, #c4a898 240px, #d06038 250px, #b89888); }
.thirty .title-text { margin-left: -135px; }
.link-btn {
  margin-left: auto; align-self: flex-start; width: 31px; height: 16px; box-sizing: border-box; font: 11px/12px "Liberation Sans", sans-serif; text-align: center;
  background: #f2f0f0; border: 1px solid #22c4ee; border-top: 0; border-radius: 0 0 2px 2px; box-shadow: 0 0 2px #40d0ff; flex: none; color: #222; margin-top: 1px;
}
.controls { display: flex; align-self: flex-start; margin-left: 3px; height: 16px; width: 103px; flex: none; margin-top: 1px; box-sizing: border-box; border: 1px solid #999; border-top: 0; border-radius: 0 0 5px 5px; background: rgba(60, 52, 52, .4); }
.controls i { display: flex; justify-content: center; align-items: center; width: 27px; border-right: 1px solid #888; box-sizing: border-box; }
.controls i.close { width: 47px; border: 0; }
.controls svg { width: 11px; height: 9px; }

.client { position: relative; display: flex; flex-direction: column; background: #fff; box-shadow: 0 0 0 1px #141010, 0 0 0 2px rgba(255, 255, 255, .45); }
.toolbar {
  display: flex; align-items: center; height: 26px; box-sizing: border-box; border-top: 1px solid #fff; overflow: hidden; position: relative;
  background: linear-gradient(#fcfcfc, #f6f6f6 50%, #ededed);
}
.toolbar > * { flex: none; }
.grip { width: 2px; height: 15px; margin-left: 4px; background: repeating-linear-gradient(#bdbdbd 0 2px, transparent 2px 4px); }
.sep { width: 1px; height: 15px; background: #a8a8a8; }
.sep.first { margin-left: 6px; margin-right: 2px; }
.sep.lead { margin-left: 3px; }
.sep.mid { margin-left: 7px; }
.sep.late { margin-left: 6px; }
.combo { display: flex; align-items: center; height: 22px; box-sizing: border-box; padding: 0 2px 0 4px; font-size: 12px; width: 69px; justify-content: space-between; border: 1px solid transparent; white-space: nowrap; letter-spacing: -.3px; }
.combo .caret { margin-top: 3px; }
.period { width: 65px; padding-left: 6px; margin-left: -2px; letter-spacing: -.1px; }
.hot { background: #c2e0ff; border-color: #3399ff; width: 50px; padding-left: 4px; margin-left: 1px; }
.caret { width: 0; height: 0; border: 2.5px solid transparent; border-top: 3px solid #000; border-bottom: 0; margin: 1px 1px 0; }
.caret.near { margin-left: 2px; }
.caret.lone { margin-left: 0; margin-right: 4px; }
.ic { width: 16px; height: 16px; display: block; }
.c1 { margin-left: 5px; }
.c2 { margin-left: 6px; }
.c3 { margin-left: 5px; }
.c4 { margin-left: 7px; }
.c5 { margin-left: 5px; }
.c6 { margin-left: 7px; }
.toggle { display: flex; align-items: center; justify-content: center; width: 23px; height: 22px; box-sizing: border-box; margin-left: 2px; border: 1px solid transparent; }
.toggle.on { border-color: #3399ff; background: #f4f9ff; }
.big { width: 17px; height: 17px; }
.c7 { margin-left: 3px; }
.c8 { margin-left: 7px; }
.c9 { margin-left: 7px; }
.c10 { margin-left: 7px; }
.overflow { display: flex; align-items: flex-end; justify-content: center; width: 12px; height: 25px; margin-left: auto; background: linear-gradient(#f6f6f6, #c8c8c8); border-radius: 4px 0 0 4px; padding-bottom: 1px; box-sizing: border-box; }
.overflow svg { width: 8px; height: 8px; }

.chart { display: block; flex: none; font-family: "Liberation Sans", Arial, sans-serif; font-size: 11px; fill: #1a1a1a; }
.chart :deep(rect) { shape-rendering: crispEdges; }
.chart :deep(.inv) { fill: #fff; }
.chart :deep(.tpo) { font: bold 9px "Liberation Mono", monospace; }
.drop {
  position: absolute; right: 1px; top: 26px; width: 23px; height: 23px; box-sizing: border-box; border: 2px solid #6c7681;
  background: #f4f4f4; display: flex; align-items: center; justify-content: center; box-shadow: inset 0 0 0 1px #fff, inset 0 0 0 2px #c8c8c8;
}
.drop .caret { border-width: 5px; border-top-width: 5px; border-bottom: 0; margin: 0; }
.scroll { display: flex; align-items: center; height: 23px; background: linear-gradient(#e2e2e2, #ececec 3px, #ececec 60%, #f0f0f0); padding: 0 6px; }
.arrow { width: 4px; height: 7px; }
.thumb { width: 15px; height: 22px; box-sizing: border-box; margin: 0 8px 0 auto; border: 1px solid #9a9a9a; border-radius: 2px; background: linear-gradient(#f6f6f6 30%, #d4d4d8 32%, #dcdcdc); }
</style>
